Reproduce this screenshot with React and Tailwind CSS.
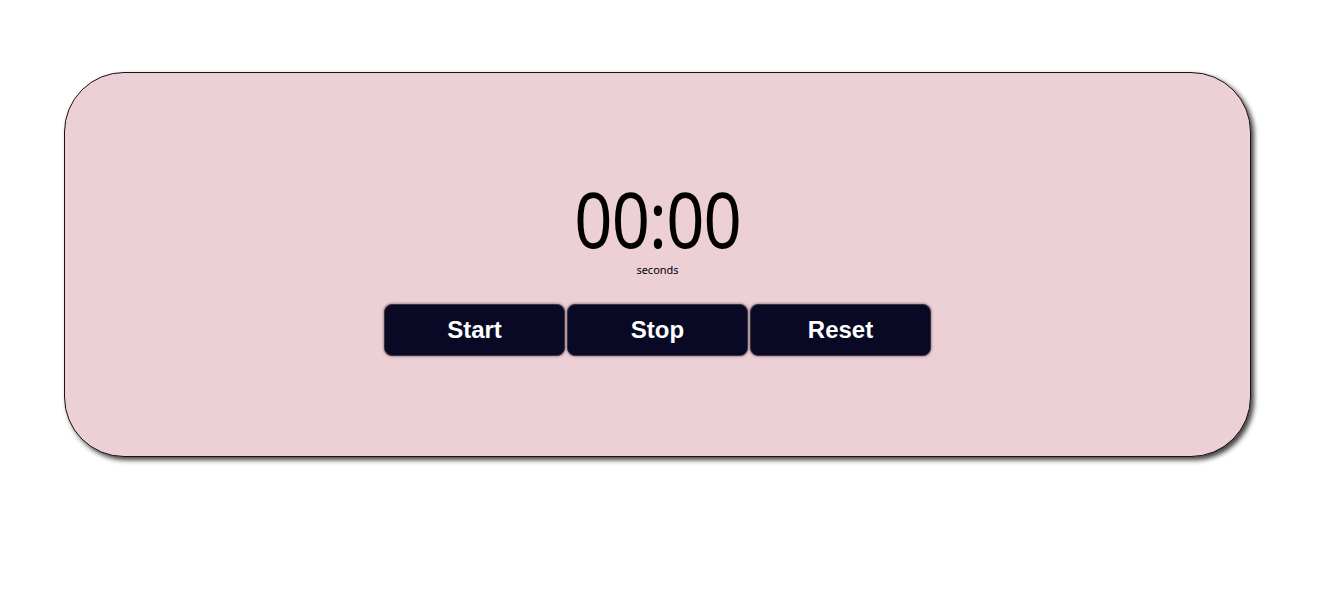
export default function App() {
  return (
    <div className="w-[1317px] h-[592px] bg-white pt-[72px] pl-[64px]">
      <div className="w-[1187px] h-[385px] box-border border border-[#1a1212] rounded-[60px] bg-[#edd0d6] shadow-[3px_3px_5px_rgba(0,0,0,0.75)] flex flex-col items-center pt-[108px]">
        <div
          className="text-[76px] leading-[76px] tracking-[-1px] text-black scale-x-[0.88]"
          style={{ fontFamily: '"Noto Sans", sans-serif' }}
        >
          00:00
        </div>
        <div
          className="mt-[5px] text-[11px] leading-[15px] text-black"
          style={{ fontFamily: '"Noto Sans", sans-serif' }}
        >
          seconds
        </div>
        <div className="mt-[27px] flex gap-[2px]">
          {["Start", "Stop", "Reset"].map((t) => (
            <button
              key={t}
              className="w-[181px] h-[52px] rounded-[8px] bg-[#090926] border border-[#3a3440] shadow-[0_0_3px_rgba(60,30,40,0.7)] text-white font-bold text-[24px] flex items-center justify-center"
              style={{ fontFamily: '"Liberation Sans", Arial, sans-serif' }}
            >
              {t}
            </button>
          ))}
        </div>
      </div>
    </div>
  );
}
